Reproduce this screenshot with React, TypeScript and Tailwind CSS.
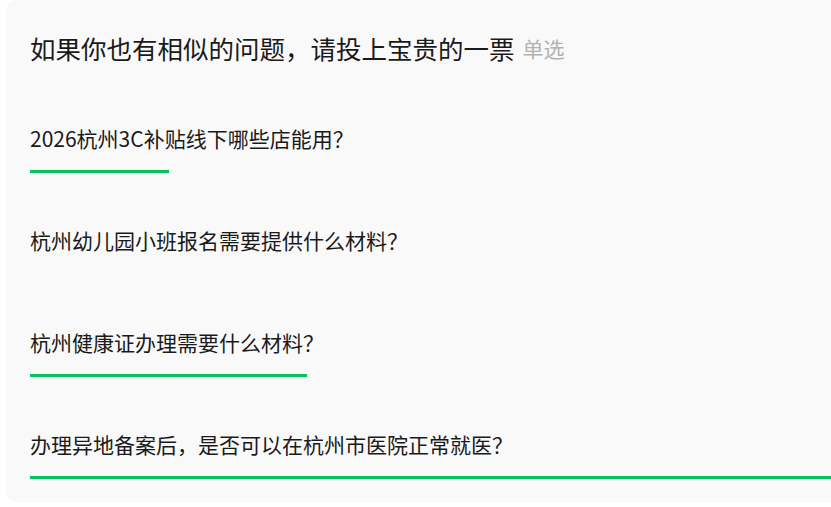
const options = [
  { label: "2026杭州3C补贴线下哪些店能用？", bar: 139 },
  { label: "杭州幼儿园小班报名需要提供什么材料？", bar: 0 },
  { label: "杭州健康证办理需要什么材料？", bar: 277 },
  { label: "办理异地备案后，是否可以在杭州市医院正常就医？", bar: 840 },
];

export default function App() {
  return (
    <div
      className="h-[507px] w-[831px] overflow-hidden bg-white pl-[6px]"
      style={{ fontFamily: '"Noto Sans CJK SC", "Noto Sans", sans-serif' }}
    >
      <div className="w-[900px] rounded-[10px] bg-[#f9f9f9] pb-[23px] pl-[24px] pt-[32px]">
        <div className="flex items-center">
          <h2 className="text-[25.5px] leading-[32px] text-[#1a1a1a]">如果你也有相似的问题，请投上宝贵的一票</h2>
          <span className="ml-[8px] text-[21px] leading-[32px] text-[#b2b2b2]">单选</span>
        </div>
        <ul className="mt-[60px] flex flex-col gap-[53px]">
          {options.map((o) => (
            <li key={o.label}>
              <p className="text-[21px] leading-[28px] text-[#1a1a1a]">{o.label}</p>
              <div className="mt-[18px] h-[3px]">
                {o.bar > 0 && <div className="h-[3px] bg-[#07c160]" style={{ width: o.bar }} />}
              </div>
            </li>
          ))}
        </ul>
      </div>
    </div>
  );
}
